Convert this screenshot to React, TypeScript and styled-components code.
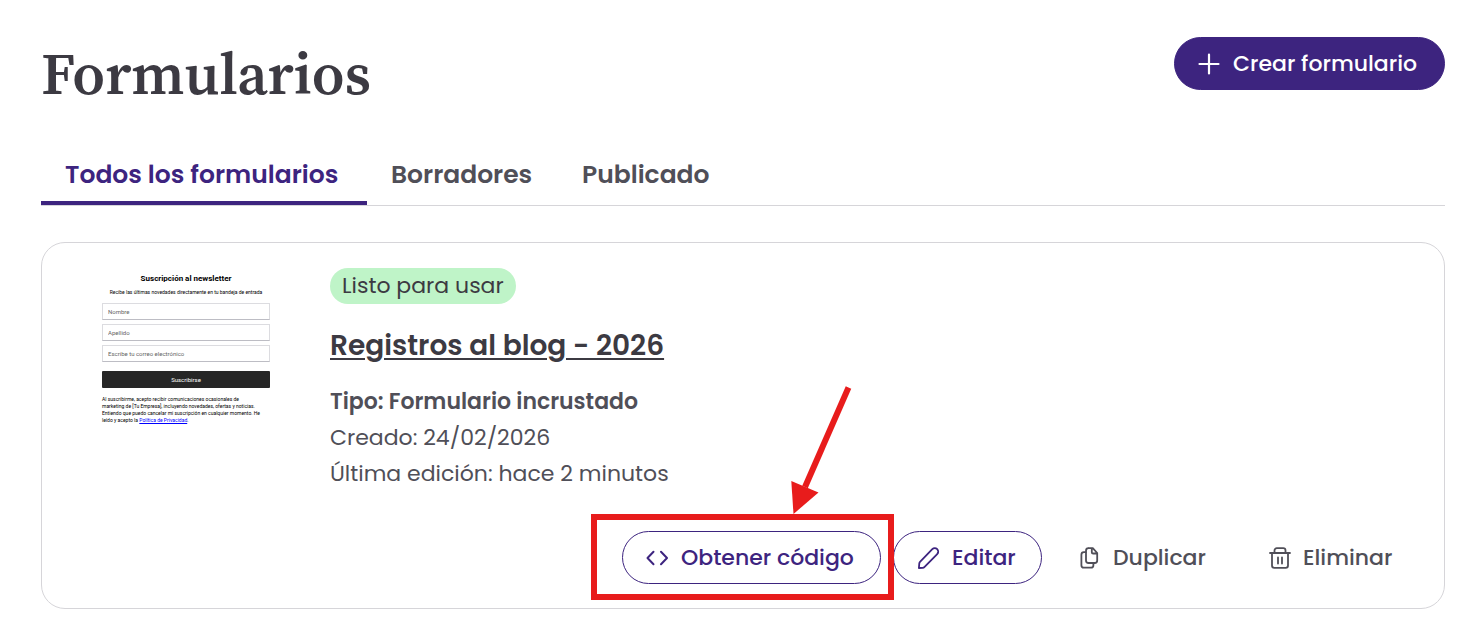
import React from "react";
import styled, { createGlobalStyle, css } from "styled-components";

const purple = "#3d247f";
const ink = "#3c3a42";
const grey = "#504f58";
const line = "#d6d5d9";
const red = "#e81c1c";

const GlobalStyle = createGlobalStyle`
  *, *::before, *::after { box-sizing: border-box; }
  body {
    margin: 0;
    background: #fff;
    color: ${grey};
    font-family: Poppins, Inter, sans-serif;
  }
  button { font-family: inherit; cursor: pointer; }
  h1, h2, p { margin: 0; }
`;

const Page = styled.main`
  padding: 37px 20px 12px 41px;
`;

const Header = styled.header`
  display: flex;
  justify-content: space-between;
  align-items: flex-start;
`;

const Title = styled.h1`
  font: 600 59px/74px "Source Serif 4", "Liberation Serif", serif;
  color: ${ink};
`;

type Variant = "primary" | "outline" | "ghost";

const variants = {
  primary: css`
    background: ${purple};
    border-color: ${purple};
    color: #fff;
  `,
  outline: css`
    background: #fff;
    border-color: ${purple};
    color: ${purple};
  `,
  ghost: css`
    background: transparent;
    border-color: transparent;
    color: ${grey};
  `,
};

const Button = styled.button<{ $variant: Variant; $min: number }>`
  display: inline-flex;
  align-items: center;
  gap: 11px;
  height: 53px;
  min-width: ${(p) => p.$min}px;
  padding: 0 22px 0 23px;
  border: 1px solid;
  border-radius: 27px;
  font-size: 22px;
  font-weight: 500;
  line-height: 32px;
  white-space: nowrap;
  ${(p) => variants[p.$variant]}
  svg { flex: none; }
`;

const Tabs = styled.div`
  display: flex;
  margin-top: 34px;
  border-bottom: 1px solid ${line};
`;

const Tab = styled.button<{ $min: number }>`
  min-width: ${(p) => p.$min}px;
  height: 60px;
  padding: 3px 24px 0;
  border: 0;
  border-bottom: 4px solid transparent;
  background: none;
  color: ${grey};
  font-size: 25px;
  font-weight: 600;
  line-height: 36px;
  text-align: left;
  white-space: nowrap;
  &[aria-selected="true"] {
    color: ${purple};
    border-bottom-color: ${purple};
  }
`;

const Card = styled.article`
  display: grid;
  grid-template-columns: 168px 1fr;
  column-gap: 60px;
  margin-top: 36px;
  padding: 25px 25px 24px 60px;
  border: 1px solid ${line};
  border-radius: 24px;
`;

const Preview = styled.form`
  display: flex;
  flex-direction: column;
  padding-top: 5px;
  color: #000;
  font-family: Roboto, sans-serif;
`;

const PreviewTitle = styled.h2`
  font-size: 8px;
  line-height: 12px;
  font-weight: 700;
  text-align: center;
`;

const PreviewText = styled.p`
  margin: 3px 0 7px;
  font-size: 5px;
  line-height: 8px;
  text-align: center;
  white-space: nowrap;
`;

const PreviewInput = styled.input`
  width: 100%;
  height: 17px;
  margin-bottom: 4px;
  padding: 0 5px 1px;
  border: 1px solid #dcdce0;
  border-bottom-color: #bdbdc4;
  background: #fff;
  font: 400 6px/8px Roboto, sans-serif;
  &::placeholder { color: #666; opacity: 1; }
`;

const PreviewSubmit = styled.button`
  height: 17px;
  margin: 5px 0 8px;
  border: 0;
  border-radius: 1px;
  background: #262626;
  color: #fff;
  font-size: 6px;
  line-height: 8px;
`;

const PreviewLegal = styled.p`
  font-size: 5px;
  line-height: 7px;
  white-space: nowrap;
  a { color: #00f; }
`;

const Info = styled.div`
  display: flex;
  flex-direction: column;
  align-items: flex-start;
`;

const Badge = styled.span`
  padding: 0 12px;
  border-radius: 18px;
  background: #bff4c8;
  color: ${ink};
  font-size: 22px;
  line-height: 36px;
`;

const FormName = styled.a`
  margin: 20px 0 16px;
  color: ${ink};
  font-size: 28px;
  font-weight: 600;
  line-height: 44px;
  text-decoration: underline;
  text-decoration-thickness: 2px;
  text-underline-offset: 3px;
`;

const Meta = styled.p<{ $strong?: boolean }>`
  font-size: 22px;
  font-weight: ${(p) => (p.$strong ? 600 : 400)};
  line-height: 36px;
`;

const Actions = styled.div`
  grid-column: 1 / -1;
  display: flex;
  justify-content: flex-end;
  gap: 12px;
  margin-top: 39px;
`;

const Highlighted = styled.div`
  position: relative;
  display: flex;
`;

const Frame = styled.span`
  position: absolute;
  z-index: 1;
  inset: -17px -13px -16px -31px;
  border: 6px solid ${red};
  pointer-events: none;
`;

const Arrow = styled.svg`
  position: absolute;
  z-index: 1;
  left: 168px;
  bottom: 70px;
  pointer-events: none;
`;

const Icon = ({ children }: { children: React.ReactNode }) => (
  <svg width="24" height="24" viewBox="0 0 24 24" fill="none" stroke="currentColor" strokeWidth="1.8" strokeLinecap="round" strokeLinejoin="round" aria-hidden="true">
    {children}
  </svg>
);

export default function App() {
  return (
    <>
      <GlobalStyle />
      <Page>
        <Header>
          <Title>Formularios</Title>
          <Button type="button" $variant="primary" $min={271}>
            <Icon><path strokeWidth="2.2" d="M11 2.5v19M1.5 12h19" /></Icon>
            Crear formulario
          </Button>
        </Header>

        <Tabs role="tablist">
          <Tab type="button" role="tab" aria-selected="true" $min={326}>Todos los formularios</Tab>
          <Tab type="button" role="tab" aria-selected="false" $min={191}>Borradores</Tab>
          <Tab type="button" role="tab" aria-selected="false" $min={177}>Publicado</Tab>
        </Tabs>

        <Card>
          <Preview onSubmit={(e) => e.preventDefault()}>
            <PreviewTitle>Suscripción al newsletter</PreviewTitle>
            <PreviewText>Recibe las últimas novedades directamente en tu bandeja de entrada</PreviewText>
            <PreviewInput aria-label="Nombre" placeholder="Nombre" />
            <PreviewInput aria-label="Apellido" placeholder="Apellido" />
            <PreviewInput aria-label="Correo electrónico" placeholder="Escribe tu correo electrónico" />
            <PreviewSubmit type="submit">Suscribirse</PreviewSubmit>
            <PreviewLegal>
              Al suscribirme, acepto recibir comunicaciones ocasionales de<br />
              marketing de [Tu Empresa], incluyendo novedades, ofertas y noticias.<br />
              Entiendo que puedo cancelar mi suscripción en cualquier momento. He<br />
              leído y acepto la <a href="#privacidad">Política de Privacidad</a>.
            </PreviewLegal>
          </Preview>

          <Info>
            <Badge>Listo para usar</Badge>
            <FormName href="#formulario">Registros al blog - 2026</FormName>
            <Meta $strong>Tipo: Formulario incrustado</Meta>
            <Meta>Creado: 24/02/2026</Meta>
            <Meta>Última edición: hace 2 minutos</Meta>
          </Info>

          <Actions>
            <Highlighted>
              <Button type="button" $variant="outline" $min={259}>
                <Icon><path strokeWidth="2" d="M7.500 5.800 1.500 12l6 6.200M15 5.800l6 6.200-6 6.200" /></Icon>
                Obtener código
              </Button>
              <Frame />
              <Arrow width="62" height="130" viewBox="0 0 62 130" aria-hidden="true">
                <path d="M58.5 3.5 15 103" stroke={red} strokeWidth="6" fill="none" />
                <path d="M1.3 97 28.5 108.5 3.5 130Z" fill={red} />
              </Arrow>
            </Highlighted>
            <Button type="button" $variant="outline" $min={149}>
              <Icon><path d="M1.900 22l.4-4.600q.1-.9.700-1.500L15.300 3.200a3.500 3.500 0 0 1 4.900 0 3.500 3.500 0 0 1 0 4.900L7.600 20.900q-.9.900-2 1Z" /></Icon>
              Editar
            </Button>
            <Button type="button" $variant="ghost" $min={178}>
              <Icon>
                <path d="M10.800 2.200h4l4.400 4.800V14.500a2.500 2.500 0 0 1-2.500 2.500h-6.200a2.500 2.500 0 0 1-2.500-2.500V4.700A2.500 2.500 0 0 1 10.500 2.200M13.800 2.200v4a1.300 1.300 0 0 0 1.300 1.300h4" />
                <path d="M7.800 6.200H5.900A2.500 2.500 0 0 0 3.400 8.700v10.500a2.500 2.500 0 0 0 2.500 2.500h7a2.500 2.500 0 0 0 2.500-2.500V17.200" />
              </Icon>
              Duplicar
            </Button>
            <Button type="button" $variant="ghost" $min={175}>
              <Icon>
                <path d="M2 7h20M6.500 7V4.500A2.300 2.300 0 0 1 8.800 2.200h6.400A2.300 2.300 0 0 1 17.500 4.500V7M4 7v12.500A2.300 2.300 0 0 0 6.300 21.800h11.400A2.300 2.300 0 0 0 20 19.500V7M10 11.500v6M14 11.500v6" />
              </Icon>
              Eliminar
            </Button>
          </Actions>
        </Card>
      </Page>
    </>
  );
}
